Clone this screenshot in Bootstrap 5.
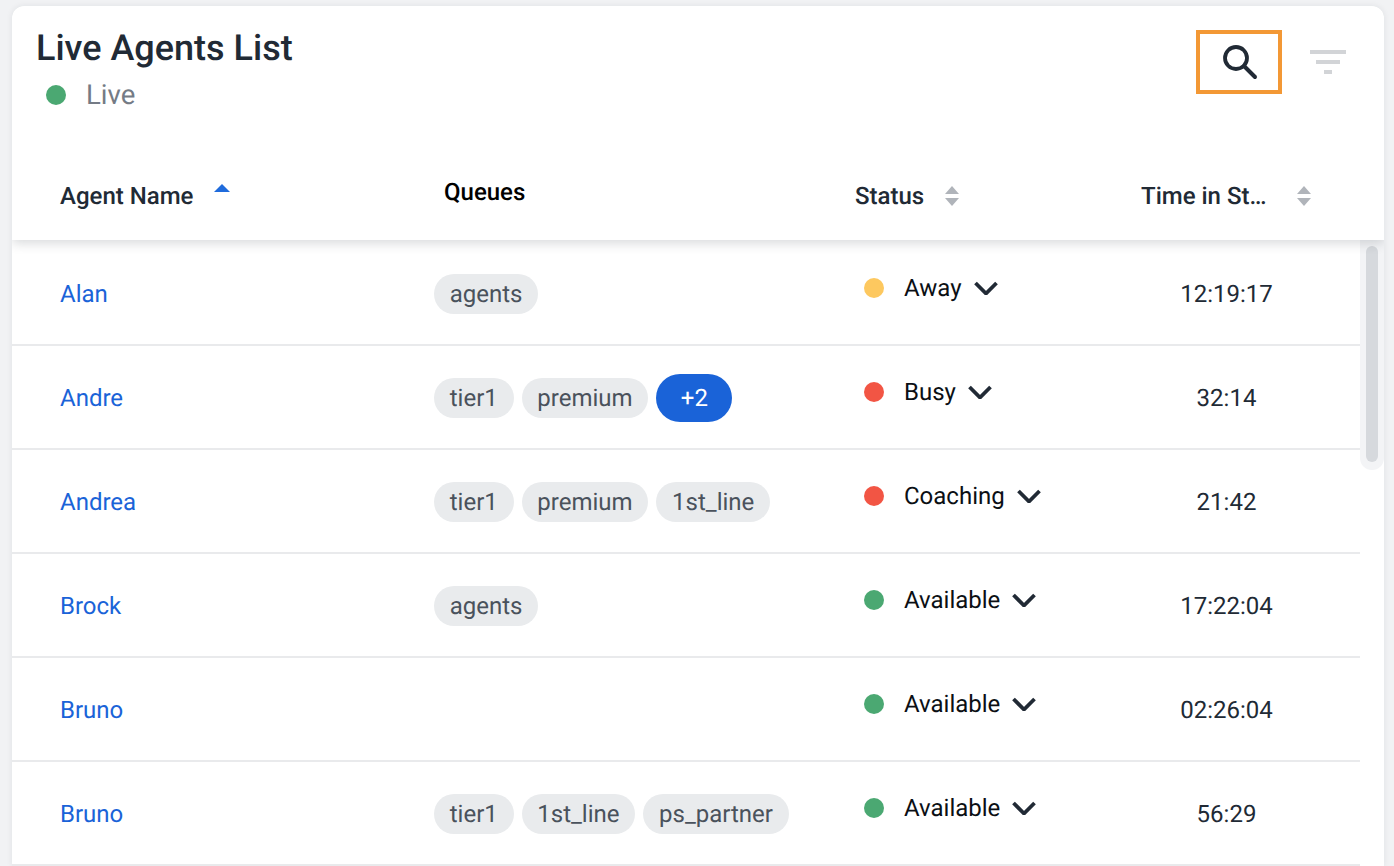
<!DOCTYPE html>
<html lang="en">
<head>
<meta charset="utf-8">
<title>Live Agents List</title>
<link href="https://cdn.jsdelivr.net/npm/bootstrap@5.3.0/dist/css/bootstrap.min.css" rel="stylesheet">
<style>
html,body{height:866px;overflow:hidden}
body{background:#f1f2f4;font-family:Roboto,"Liberation Sans",sans-serif;color:#212a35;padding:6px 10px 0 12px;text-rendering:geometricPrecision}
.lv-card{background:#fff;border-radius:12px 12px 0 0;box-shadow:0 0 6px rgba(30,40,50,.08);height:860px;overflow:hidden}
.lv-head{height:234px;position:relative;z-index:2;background:#fff;box-shadow:0 3px 12px rgba(30,40,50,.18);border-radius:12px 12px 0 0}
.lv-top{height:143px;padding:22px 38px 0 24px}
.lv-title{font-size:36px;font-weight:500;line-height:40px;margin:0;color:#212a35}
.lv-live{font-size:27.5px;line-height:32px;color:#747b85;padding-left:10px;margin-top:11px;gap:20px}
.lv-dot{width:20px;height:20px;border-radius:50%;flex:none}
.lv-green{background:#4ba872}
.lv-amber{background:#fdc85f}
.lv-red{background:#f25544}
.lv-search{width:86px;height:64px;border:4px solid #f39835;margin-top:2px}
.lv-filter{margin:22px 0 0 28px}
.lv-cols{height:91px;font-size:24px;font-weight:500;padding-top:29px}
.lv-c1{width:422px;flex:none;padding-left:48px}
.lv-c2{width:421px;flex:none}
.lv-c3{width:286px;flex:none}
.lv-c4{flex:1 1 0;min-width:0}
.lv-hq{color:#000;padding-left:10px;margin-top:-4px}
.lv-body{height:626px;overflow:hidden;position:relative;padding-top:2px}
.lv-row{height:104px;border-bottom:2px solid #e9eaec;width:1348px;font-size:24px;padding-top:2px}
.lv-row a{color:#1a63d8;text-decoration:none}
.lv-chip{background:#e9ebed;color:#4a525c;height:40px;line-height:40px;padding:0 15.75px;border-radius:20px;white-space:nowrap}
.lv-more{background:#1a63d8;color:#fff;height:48px;line-height:48px;width:76px;text-align:center;border-radius:24px}
.lv-stat{color:#0b0f14;gap:20px;margin-top:-12px;padding-left:9px}
.lv-chev{margin-left:-8px}
.lv-time{text-align:center;width:171px;color:#212a35}
.lv-sb{position:absolute;right:0;top:0;width:24px;height:230px;background:#f3f4f6;border-radius:0 0 12px 12px}
.lv-sbt{position:absolute;left:6px;top:6px;width:12px;height:216px;background:#d6d9dd;border-radius:6px}
.lv-sort{margin-left:20px;flex:none}
.lv-up{margin-bottom:16px;margin-left:21px}
.lv-far{margin-left:30px}
</style>
</head>
<body>
<div class="lv-card">
  <div class="lv-head">
    <div class="lv-top d-flex justify-content-between">
      <div>
        <h1 class="lv-title">Live Agents List</h1>
        <div class="lv-live d-flex align-items-center"><span class="lv-dot lv-green"></span><span>Live</span></div>
      </div>
      <div class="d-flex align-items-start">
        <div class="lv-search d-flex align-items-center justify-content-center">
          <svg width="38" height="38" viewBox="0 0 38 38" fill="none" stroke="#212a35" stroke-width="3.8"><circle cx="16" cy="15" r="11"/><path d="M24 23l11 11" stroke-linecap="round" stroke-width="4"/></svg>
        </div>
        <svg class="lv-filter" width="36" height="24" viewBox="0 0 36 24" fill="#d2d4d7"><rect width="36" height="4"/><rect x="6" y="10" width="24" height="4"/><rect x="14" y="20" width="8" height="4"/></svg>
      </div>
    </div>
    <div class="lv-cols d-flex align-items-start">
      <div class="lv-c1 d-flex align-items-center"><span>Agent Name</span>
        <svg class="lv-sort lv-up" width="16" height="9" viewBox="0 0 16 9" fill="#1f6bdc"><path d="M8 0l8 8H0z"/></svg></div>
      <div class="lv-c2 lv-hq">Queues</div>
      <div class="lv-c3 d-flex align-items-center"><span>Status</span>
        <svg class="lv-sort" width="16" height="20" viewBox="0 0 16 20" fill="#b0b4ba"><path d="M8 0l7 8H1zM8 20l7-8H1z"/></svg></div>
      <div class="lv-c4 d-flex align-items-center"><span>Time in St…</span>
        <svg class="lv-sort lv-far" width="16" height="20" viewBox="0 0 16 20" fill="#b0b4ba"><path d="M8 0l7 8H1zM8 20l7-8H1z"/></svg></div>
    </div>
  </div>
  <div class="lv-body">
    <div class="lv-row d-flex align-items-center">
      <div class="lv-c1"><a href="#">Alan</a></div>
      <div class="lv-c2 d-flex align-items-center gap-2"><span class="lv-chip">agents</span></div>
      <div class="lv-c3 lv-stat d-flex align-items-center"><span class="lv-dot lv-amber"></span><span>Away</span><svg class="lv-chev" width="24" height="14" viewBox="0 0 24 14" fill="none" stroke="#212a35" stroke-width="3.8"><path d="M1.5 2L12 12.5 22.5 2"/></svg></div>
      <div class="lv-time">12:19:17</div>
    </div>
    <div class="lv-row d-flex align-items-center">
      <div class="lv-c1"><a href="#">Andre</a></div>
      <div class="lv-c2 d-flex align-items-center gap-2"><span class="lv-chip">tier1</span><span class="lv-chip">premium</span><span class="lv-more">+2</span></div>
      <div class="lv-c3 lv-stat d-flex align-items-center"><span class="lv-dot lv-red"></span><span>Busy</span><svg class="lv-chev" width="24" height="14" viewBox="0 0 24 14" fill="none" stroke="#212a35" stroke-width="3.8"><path d="M1.5 2L12 12.5 22.5 2"/></svg></div>
      <div class="lv-time">32:14</div>
    </div>
    <div class="lv-row d-flex align-items-center">
      <div class="lv-c1"><a href="#">Andrea</a></div>
      <div class="lv-c2 d-flex align-items-center gap-2"><span class="lv-chip">tier1</span><span class="lv-chip">premium</span><span class="lv-chip">1st_line</span></div>
      <div class="lv-c3 lv-stat d-flex align-items-center"><span class="lv-dot lv-red"></span><span>Coaching</span><svg class="lv-chev" width="24" height="14" viewBox="0 0 24 14" fill="none" stroke="#212a35" stroke-width="3.8"><path d="M1.5 2L12 12.5 22.5 2"/></svg></div>
      <div class="lv-time">21:42</div>
    </div>
    <div class="lv-row d-flex align-items-center">
      <div class="lv-c1"><a href="#">Brock</a></div>
      <div class="lv-c2 d-flex align-items-center gap-2"><span class="lv-chip">agents</span></div>
      <div class="lv-c3 lv-stat d-flex align-items-center"><span class="lv-dot lv-green"></span><span>Available</span><svg class="lv-chev" width="24" height="14" viewBox="0 0 24 14" fill="none" stroke="#212a35" stroke-width="3.8"><path d="M1.5 2L12 12.5 22.5 2"/></svg></div>
      <div class="lv-time">17:22:04</div>
    </div>
    <div class="lv-row d-flex align-items-center">
      <div class="lv-c1"><a href="#">Bruno</a></div>
      <div class="lv-c2 d-flex align-items-center gap-2"></div>
      <div class="lv-c3 lv-stat d-flex align-items-center"><span class="lv-dot lv-green"></span><span>Available</span><svg class="lv-chev" width="24" height="14" viewBox="0 0 24 14" fill="none" stroke="#212a35" stroke-width="3.8"><path d="M1.5 2L12 12.5 22.5 2"/></svg></div>
      <div class="lv-time">02:26:04</div>
    </div>
    <div class="lv-row d-flex align-items-center">
      <div class="lv-c1"><a href="#">Bruno</a></div>
      <div class="lv-c2 d-flex align-items-center gap-2"><span class="lv-chip">tier1</span><span class="lv-chip">1st_line</span><span class="lv-chip">ps_partner</span></div>
      <div class="lv-c3 lv-stat d-flex align-items-center"><span class="lv-dot lv-green"></span><span>Available</span><svg class="lv-chev" width="24" height="14" viewBox="0 0 24 14" fill="none" stroke="#212a35" stroke-width="3.8"><path d="M1.5 2L12 12.5 22.5 2"/></svg></div>
      <div class="lv-time">56:29</div>
    </div>
    <div class="lv-sb"><div class="lv-sbt"></div></div>
  </div>
</div>
<script src="https://cdn.jsdelivr.net/npm/bootstrap@5.3.0/dist/js/bootstrap.bundle.min.js"></script>
</body>
</html>
